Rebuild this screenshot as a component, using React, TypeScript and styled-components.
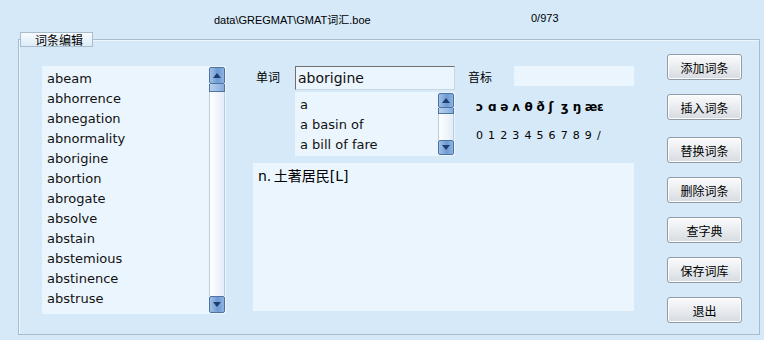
import React from 'react';
import styled, { createGlobalStyle } from 'styled-components';

const GlobalStyle = createGlobalStyle`
  html, body {
    margin: 0;
    padding: 0;
    background: #d5e9f8;
  }
  body {
    width: 764px;
    height: 340px;
    overflow: hidden;
    font-family: "DejaVu Sans", "Noto Sans CJK SC", sans-serif;
    color: #000;
  }
`;

const Window = styled.div`
  width: 764px;
  height: 340px;
  background: #d5e9f8;
`;

const Header = styled.div`
  height: 32px;
  display: flex;
  align-items: flex-start;
  padding-left: 214px;
  box-sizing: border-box;
  font-family: "Liberation Sans", "Noto Sans CJK SC", sans-serif;
  font-size: 11px;
  line-height: 14px;
`;

const FilePath = styled.span`
  flex: 0 0 317px;
  padding-top: 13px;
`;

const Counter = styled.span`
  padding-top: 11px;
`;

const Group = styled.fieldset`
  margin: 0 0 0 18px;
  width: 742px;
  height: 303px;
  box-sizing: border-box;
  border: 1px solid #a7bccd;
  box-shadow: inset 1px 1px 0 #eef6fc;
  padding: 7px 0 0 0;
  display: flex;
  align-items: flex-start;
`;

const Legend = styled.legend`
  margin-left: 1px;
  padding: 0 9px 0 14px;
  height: 15px;
  box-sizing: border-box;
  border: 1px solid #a7bccd;
  background: linear-gradient(#f7fbfe, #dcebf7);
  font-family: "Noto Sans CJK SC", sans-serif;
  font-size: 12px;
  line-height: 13px;
`;

const Body = styled.div`
  display: flex;
  align-items: flex-start;
  width: 100%;
  padding-left: 23px;
`;

const ListBox = styled.div<{ $w: number; $h: number }>`
  width: ${p => p.$w}px;
  height: ${p => p.$h}px;
  background: #ebf5fd;
  display: flex;
  box-sizing: border-box;
  padding: 1px 1px 1px 0;
`;

const Items = styled.div<{ $line: number }>`
  flex: 1;
  padding: 2px 0 0 5px;
  font-size: 13px;
  line-height: ${p => p.$line}px;
  color: #111;
  overflow: hidden;
  white-space: nowrap;
`;

const WordList = styled(ListBox)`
  margin-top: 12px;
`;

const Bar = styled.div`
  width: 16px;
  display: flex;
  flex-direction: column;
`;

const ArrowBtn = styled.div<{ $h: number }>`
  height: ${p => p.$h}px;
  box-sizing: border-box;
  border: 1px solid #4f73a0;
  border-radius: 2px;
  background: linear-gradient(90deg, #9fc0e8, #6e9bd3 55%, #8cb2e2);
  display: flex;
  align-items: center;
  justify-content: center;
`;

const Thumb = styled.div<{ $h: number }>`
  height: ${p => p.$h}px;
  box-sizing: border-box;
  border: 1px solid #4f73a0;
  border-top: none;
  background: linear-gradient(90deg, #b7d1ef, #86acdc);
`;

const Track = styled.div`
  flex: 1;
  border-left: 1px solid #b9cde0;
  border-right: 1px solid #b9cde0;
  background: linear-gradient(90deg, #ffffff, #e2edf8);
`;

const Scrollbar: React.FC<{ btn: number; thumb: number }> = ({ btn, thumb }) => (
  <Bar>
    <ArrowBtn $h={btn}>
      <svg width="8" height="5" viewBox="0 0 8 5"><polygon points="0,5 8,5 4,0" fill="#1e3f6c" /></svg>
    </ArrowBtn>
    <Thumb $h={thumb} />
    <Track />
    <ArrowBtn $h={btn}>
      <svg width="8" height="5" viewBox="0 0 8 5"><polygon points="0,0 8,0 4,5" fill="#1e3f6c" /></svg>
    </ArrowBtn>
  </Bar>
);

const Middle = styled.div`
  margin: 12px 0 0 27px;
  width: 381px;
  display: flex;
  flex-direction: column;
  gap: 7px;
`;

const TopRow = styled.div`
  display: flex;
  align-items: flex-start;
`;

const Label = styled.span<{ $w: number; $pad: number }>`
  flex: 0 0 ${p => p.$w}px;
  box-sizing: border-box;
  padding: 3px 0 0 ${p => p.$pad}px;
  font-family: "Noto Sans CJK SC", sans-serif;
  font-size: 12px;
  line-height: 16px;
`;

const WordColumn = styled.div`
  width: 160px;
  display: flex;
  flex-direction: column;
  gap: 2px;
`;

const WordInput = styled.div`
  height: 24px;
  box-sizing: border-box;
  background: #ebf5fd;
  border-top: 1px solid #6f6f6f;
  border-left: 1px solid #6f6f6f;
  border-right: 1px solid #c9d7e4;
  border-bottom: 1px solid #c9d7e4;
  padding-left: 2px;
  font-size: 14px;
  line-height: 22px;
  color: #111;
`;

const Phonetic = styled.div`
  display: flex;
  flex-direction: column;
  padding-left: 13px;
`;

const PhoneticHead = styled.div`
  display: flex;
`;

const PhoneticField = styled.div`
  width: 120px;
  height: 20px;
  background: #ebf5fd;
`;

const SymbolRow = styled.div<{ $top: number; $bold?: boolean; $size: number }>`
  display: flex;
  margin-top: ${p => p.$top}px;
  padding-left: 8px;
  font-family: "DejaVu Sans", sans-serif;
  font-size: ${p => p.$size}px;
  font-weight: ${p => (p.$bold ? 700 : 400)};
  line-height: 16px;
`;

const Symbol = styled.span`
  width: 12.1px;
  text-align: left;
`;

const Definition = styled.div`
  height: 148px;
  background: #ebf5fd;
  padding: 4px 0 0 5px;
  box-sizing: border-box;
  font-family: "DejaVu Sans", "Noto Sans CJK SC", sans-serif;
  font-size: 14px;
  line-height: 18px;
  word-spacing: -2px;
`;

const Buttons = styled.div`
  margin-left: 33px;
  display: flex;
  flex-direction: column;
  gap: 14px;
`;

const Button = styled.button<{ $extra?: number }>`
  width: 75px;
  height: 26px;
  margin-top: ${p => p.$extra || 0}px;
  padding: 0;
  border: 1px solid #8f9ba6;
  border-radius: 3px;
  background: linear-gradient(#fbfbfc, #e9ecef 50%, #d6dbe0);
  box-shadow: inset 0 0 0 1px #ffffff;
  font-family: "Noto Sans CJK SC", sans-serif;
  font-size: 12px;
  color: #000;
  cursor: pointer;
`;

const words = [
  'abeam', 'abhorrence', 'abnegation', 'abnormality', 'aborigine', 'abortion',
  'abrogate', 'absolve', 'abstain', 'abstemious', 'abstinence', 'abstruse',
];

const suggestions = ['a', 'a basin of', 'a bill of fare'];

const ipa = ['ɔ', 'ɑ', 'ə', 'ʌ', 'θ', 'ð', 'ʃ', 'ʒ', 'ŋ', 'æ', 'ɛ'];
const digits = ['0', '1', '2', '3', '4', '5', '6', '7', '8', '9', '/'];

const actions: { label: string; extra?: number }[] = [
  { label: '添加词条' },
  { label: '插入词条' },
  { label: '替换词条', extra: 3 },
  { label: '删除词条' },
  { label: '查字典' },
  { label: '保存词库' },
  { label: '退出' },
];

export default function App() {
  return (
    <Window>
      <GlobalStyle />
      <Header>
        <FilePath>data\GREGMAT\GMAT词汇.boe</FilePath>
        <Counter>0/973</Counter>
      </Header>
      <Group>
        <Legend>词条编辑</Legend>
        <Body>
          <WordList $w={184} $h={248}>
            <Items $line={20}>
              {words.map(w => <div key={w}>{w}</div>)}
            </Items>
            <Scrollbar btn={17} thumb={8} />
          </WordList>

          <Middle>
            <TopRow>
              <Label $w={42} $pad={3}>单词</Label>
              <WordColumn>
                <WordInput>aborigine</WordInput>
                <ListBox $w={160} $h={64}>
                  <Items $line={20}>
                    {suggestions.map(s => <div key={s}>{s}</div>)}
                  </Items>
                  <Scrollbar btn={15} thumb={6} />
                </ListBox>
              </WordColumn>
              <Phonetic>
                <PhoneticHead>
                  <Label $w={46} $pad={0}>音标</Label>
                  <PhoneticField />
                </PhoneticHead>
                <SymbolRow $top={13} $bold $size={12}>
                  {ipa.map(s => <Symbol key={s}>{s}</Symbol>)}
                </SymbolRow>
                <SymbolRow $top={13} $size={11}>
                  {digits.map(s => <Symbol key={s}>{s}</Symbol>)}
                </SymbolRow>
              </Phonetic>
            </TopRow>
            <Definition>n. 土著居民[L]</Definition>
          </Middle>

          <Buttons>
            {actions.map(a => (
              <Button key={a.label} $extra={a.extra}>{a.label}</Button>
            ))}
          </Buttons>
        </Body>
      </Group>
    </Window>
  );
}
